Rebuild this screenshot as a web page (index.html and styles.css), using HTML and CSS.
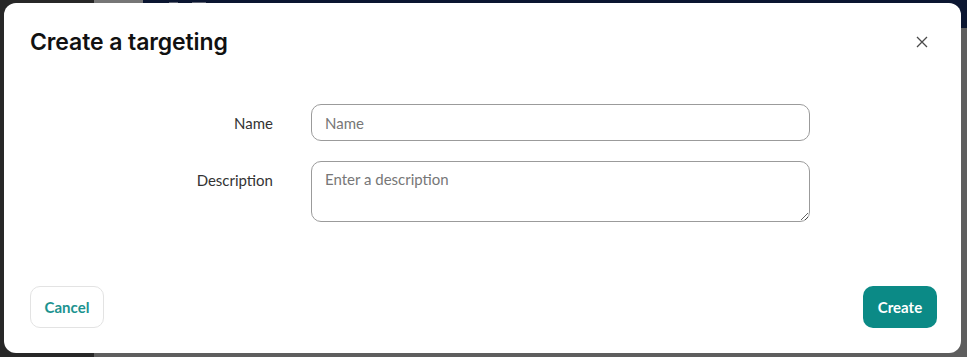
FILE: index.html
```html
<!DOCTYPE html>
<html lang="en">
<head>
<meta charset="utf-8">
<title>Create a targeting</title>
<link rel="stylesheet" href="styles.css">
</head>
<body>
<div class="app">
  <aside class="sidebar"></aside>
  <div class="main">
    <header class="topbar">
      <div class="brand"></div>
      <nav class="nav">
        <span class="nav-icon"></span>
        <span class="nav-icon grid"></span>
        <span class="nav-text">Profile</span>
      </nav>
    </header>
    <div class="content"></div>
  </div>
</div>

<div class="overlay">
  <div class="modal" role="dialog" aria-labelledby="modal-title">
    <div class="modal-header">
      <h2 id="modal-title" class="modal-title">Create a targeting</h2>
      <button class="close-btn" aria-label="Close">
        <svg width="12" height="12" viewBox="0 0 12 12"><path d="M1 1L11 11M11 1L1 11" stroke="#4a4a4a" stroke-width="1.3" fill="none"/></svg>
      </button>
    </div>
    <form class="form">
      <div class="row">
        <label class="label" for="name">Name</label>
        <input id="name" class="input" type="text" placeholder="Name">
      </div>
      <div class="row row-top">
        <label class="label label-top" for="desc">Description</label>
        <textarea id="desc" class="input textarea" placeholder="Enter a description"></textarea>
      </div>
    </form>
    <div class="modal-footer">
      <button class="btn btn-outline" type="button">Cancel</button>
      <button class="btn btn-primary" type="button">Create</button>
    </div>
  </div>
</div>
</body>
</html>
```

FILE: styles.css
```css
* { box-sizing: border-box; }
html, body { margin: 0; padding: 0; }
body {
  width: 967px;
  height: 357px;
  overflow: hidden;
  position: relative;
  font-family: Lato, "Open Sans", sans-serif;
}

/* dimmed page behind the dialog */
.app { display: flex; width: 100%; height: 100%; }
.sidebar { width: 94px; background: #272727; flex: none; }
.main { flex: 1; display: flex; flex-direction: column; }
.topbar { height: 28px; display: flex; background: #0b1631; flex: none; }
.brand { width: 49px; background: #767676; }
.nav { display: flex; align-items: flex-start; gap: 14px; padding-left: 26px; padding-top: 0; color: #8c8f99; }
.nav-icon { width: 9px; height: 9px; background: #5e6373; display: block; margin-top: 2px; }
.nav-icon.grid { width: 14px; }
.nav-text { font-size: 17px; line-height: 17px; font-family: Lato, sans-serif; margin-left: 14px; margin-top: 1px; }
.content { flex: 1; background: #5e5e5e; }

.overlay { position: absolute; inset: 0; padding: 3px 0 0 4px; }
.modal {
  width: 957px;
  height: 350px;
  background: #fff;
  border-radius: 12px;
  display: flex;
  flex-direction: column;
  padding: 0 24px 25px 26px;
}
.modal-header {
  height: 78px;
  display: flex;
  align-items: center;
  justify-content: space-between;
}
.modal-title {
  margin: 0;
  font-family: Inter, sans-serif;
  font-weight: 600;
  font-size: 23px;
  letter-spacing: -0.1px;
  color: #111;
}
.close-btn {
  border: 0;
  background: none;
  padding: 0;
  width: 12px;
  height: 12px;
  margin-right: 9px;
  display: flex;
}

.form { display: flex; flex-direction: column; gap: 20px; padding-top: 23px; }
.row { display: grid; grid-template-columns: 243px 499px; column-gap: 38px; align-items: center; }
.row-top { align-items: start; }
.label { text-align: right; font-size: 15px; color: #333; }
.label-top { padding-top: 10px; }
.input {
  height: 37px;
  border: 1px solid #9b9b9b;
  border-radius: 10px;
  font-family: Lato, sans-serif;
  font-size: 15px;
  padding: 0 13px;
  color: #333;
  outline: none;
}
.input::placeholder { color: #777; }
.textarea { height: 61px; padding: 8px 13px; resize: vertical; display: block; }

.modal-footer { margin-top: auto; display: flex; justify-content: space-between; }
.btn {
  height: 42px;
  width: 74px;
  border-radius: 10px;
  font-family: Lato, sans-serif;
  font-size: 15px;
  font-weight: 700;
  cursor: pointer;
}
.btn-outline { background: #fff; border: 1px solid #e3e3e3; color: #1c938f; }
.btn-primary { background: #0b8a86; border: 0; color: #fff; }
```
